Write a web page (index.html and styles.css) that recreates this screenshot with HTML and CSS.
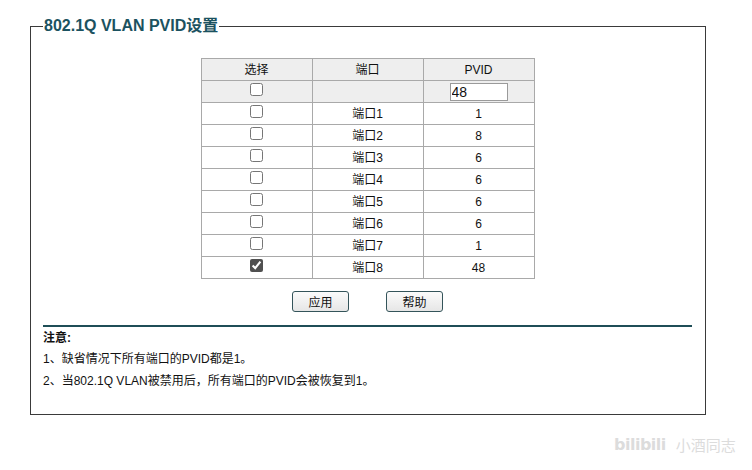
FILE: index.html
```html
<!DOCTYPE html>
<html lang="zh-CN">
<head>
<meta charset="utf-8">
<title>802.1Q VLAN PVID设置</title>
<link rel="stylesheet" href="styles.css">
</head>
<body>
<div class="page">
  <fieldset class="panel">
    <legend class="panel-title">802.1Q VLAN PVID设置</legend>
    <table class="pvid-table">
      <thead>
        <tr class="head-row"><th>选择</th><th>端口</th><th>PVID</th></tr>
      </thead>
      <tbody>
        <tr class="edit-row"><td class="sel"><input type="checkbox" class="cb"></td><td></td><td><input type="text" class="pvid-input" value="48"></td></tr>
        <tr><td class="sel"><input type="checkbox" class="cb"></td><td>端口1</td><td>1</td></tr>
        <tr><td class="sel"><input type="checkbox" class="cb"></td><td>端口2</td><td>8</td></tr>
        <tr><td class="sel"><input type="checkbox" class="cb"></td><td>端口3</td><td>6</td></tr>
        <tr><td class="sel"><input type="checkbox" class="cb"></td><td>端口4</td><td>6</td></tr>
        <tr><td class="sel"><input type="checkbox" class="cb"></td><td>端口5</td><td>6</td></tr>
        <tr><td class="sel"><input type="checkbox" class="cb"></td><td>端口6</td><td>6</td></tr>
        <tr><td class="sel"><input type="checkbox" class="cb"></td><td>端口7</td><td>1</td></tr>
        <tr><td class="sel"><input type="checkbox" class="cb" checked></td><td>端口8</td><td>48</td></tr>
      </tbody>
    </table>
    <div class="actions">
      <button class="btn" type="button">应用</button>
      <button class="btn" type="button">帮助</button>
    </div>
    <div class="notes">
      <div class="notes-title">注意:</div>
      <p class="note">1、缺省情况下所有端口的PVID都是1。</p>
      <p class="note">2、当802.1Q VLAN被禁用后，所有端口的PVID会被恢复到1。</p>
    </div>
  </fieldset>
  <div class="watermark"><span class="wm-logo">bilibili</span><span class="wm-name">小酒同志</span></div>
</div>
</body>
</html>
```

FILE: styles.css
```css
html, body {
  margin: 0;
  padding: 0;
  background: #ffffff;
}
body {
  font-family: "Liberation Sans", Arial, "Noto Sans CJK SC", sans-serif;
  font-size: 12px;
  color: #111111;
}
.page {
  position: relative;
  width: 752px;
  height: 470px;
  padding: 17px 0 0 30px;
  box-sizing: border-box;
}
.panel {
  box-sizing: border-box;
  width: 676px;
  height: 398px;
  margin: 0;
  padding: 0 13px 0 12px;
  border: 1px solid #3a3a3a;
  min-width: 0;
}
.panel-title {
  margin-left: 0;
  padding: 0 1px;
  font-size: 16px;
  line-height: 18px;
  font-weight: bold;
  color: #1b5260;
}
.pvid-table {
  margin: 23px auto 0;
  width: 334px;
  border-collapse: collapse;
  table-layout: fixed;
}
.pvid-table th,
.pvid-table td {
  border: 1px solid #a9a9a9;
  height: 21px;
  padding: 0;
  text-align: center;
  vertical-align: middle;
  font-weight: normal;
  font-size: 12px;
  line-height: 14px;
}
.head-row th,
.edit-row td {
  background: #eeeeee;
}
.pvid-table td.sel {
  vertical-align: top;
}
.cb {
  display: block;
  width: 13px;
  height: 13px;
  margin: 2px auto 0;
  accent-color: #505050;
}
.pvid-input {
  display: block;
  box-sizing: border-box;
  width: 58px;
  height: 18px;
  margin: 0 auto;
  padding: 0 1px;
  border: 1px solid #9a9a9a;
  font-family: "Liberation Sans", Arial, sans-serif;
  font-size: 14px;
  color: #111;
}
.actions {
  display: flex;
  justify-content: center;
  gap: 37px;
  margin-top: 12px;
  margin-left: 0;
}
.btn {
  box-sizing: border-box;
  width: 57px;
  height: 21px;
  padding: 3px 0 0;
  border: 1px solid #34545a;
  border-radius: 3px;
  background: linear-gradient(#fbfbfb, #e6e6e6);
  font-family: "Liberation Sans", Arial, "Noto Sans CJK SC", sans-serif;
  font-size: 12px;
  line-height: 14px;
  color: #111;
}
.notes {
  margin-top: 13px;
  border-top: 2px solid #1f4e57;
  padding-top: 3px;
}
.notes-title {
  font-weight: bold;
  line-height: 16px;
}
.note {
  margin: 6px 0 0;
  line-height: 16px;
}
.notes-title + .note {
  margin-top: 5px;
}
.watermark {
  position: absolute;
  left: 614px;
  top: 435px;
  display: flex;
  gap: 10px;
  color: #dcdcdc;
  font-size: 15px;
  line-height: 20px;
}
.wm-logo {
  font-family: "DejaVu Sans", sans-serif;
  font-weight: bold;
  font-size: 16px;
  letter-spacing: -0.5px;
}
.wm-name {
  font-family: "Noto Sans CJK SC", sans-serif;
  font-size: 15px;
}
```
